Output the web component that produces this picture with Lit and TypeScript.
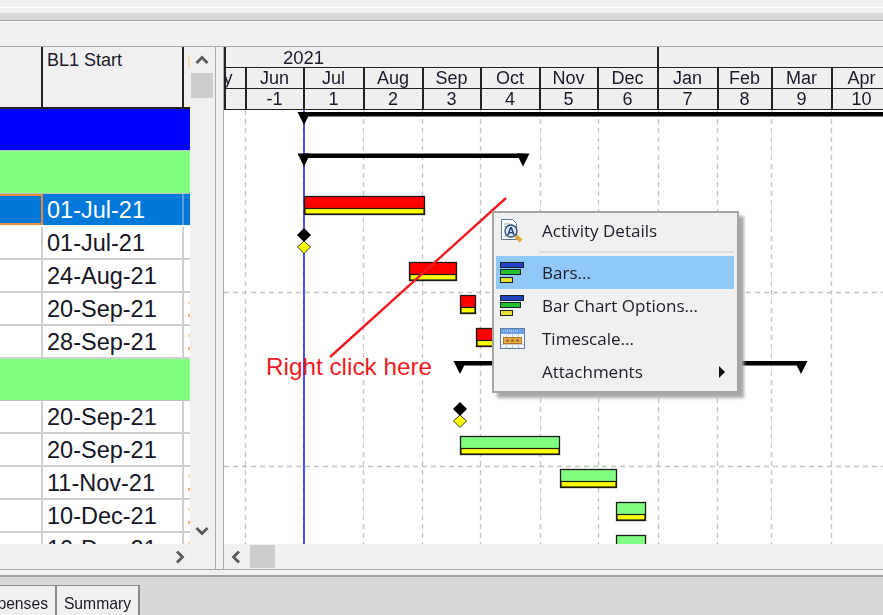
import { LitElement, html, css, svg } from "lit";
import { customElement } from "lit/decorators.js";

const months = [
  ["May", "", 21, 59], ["Jun", "-1", 58], ["Jul", "1", 60], ["Aug", "2", 59], ["Sep", "3", 58], ["Oct", "4", 59],
  ["Nov", "5", 58], ["Dec", "6", 60], ["Jan", "7", 60], ["Feb", "8", 54], ["Mar", "9", 60], ["Apr", "10", 60],
] as const;

const gridX = [245, 303, 363, 422, 480, 540, 598, 658, 717, 771, 831];

type Row = { kind: "blue" | "green" | "green1" | "sel" | "row" | "cut"; date?: string; mark?: boolean };
const rows: Row[] = [
  { kind: "blue" }, { kind: "green1" },
  { kind: "sel", date: "01-Jul-21" }, { kind: "row", date: "01-Jul-21" }, { kind: "row", date: "24-Aug-21" },
  { kind: "row", date: "20-Sep-21", mark: true }, { kind: "row", date: "28-Sep-21", mark: true },
  { kind: "green" },
  { kind: "row", date: "20-Sep-21" }, { kind: "row", date: "20-Sep-21" },
  { kind: "row", date: "11-Nov-21", mark: true }, { kind: "row", date: "10-Dec-21", mark: true },
  { kind: "cut", date: "10-Dec-21", mark: true },
];

const Y0 = 110; // gantt body origin in page y
const X0 = 224; // gantt body origin in page x

function bar(x1: number, x2: number, y: number, fill: string) {
  return svg`<rect x=${x1 + 0.5} y=${y + 0.5} width=${x2 - x1 - 1} height="18" fill=${fill} stroke="#1a1a1a" stroke-width="1.3"/>
    <rect x=${x1 + 1} y=${y + 12.5} width=${x2 - x1 - 2} height="5.5" fill="#ffff00" stroke="#1a1a1a" stroke-width="1.2"/>`;
}
function summary(x1: number, x2: number, y: number) {
  const tri = (c: number) => svg`<polygon points="${c - 6.5},${y} ${c + 6.5},${y} ${c},${y + 13}" fill="#000"/>`;
  return svg`<rect x=${x1} y=${y} width=${x2 - x1} height="4.5" fill="#000"/>${tri(x1)}${x2 < 880 ? tri(x2) : ""}`;
}
function milestone(x: number, y: number) {
  return svg`<polygon points="${x},${y - 7} ${x + 7},${y} ${x},${y + 7} ${x - 7},${y}" fill="#000"/>
    <polygon points="${x},${y + 6} ${x + 6.5},${y + 12} ${x},${y + 18.5} ${x - 6.5},${y + 12}" fill="#ffff00" stroke="#333" stroke-width="1"/>`;
}

@customElement("app-root")
export class AppRoot extends LitElement {
  static styles = css`
    :host { display: block; width: 883px; height: 615px; overflow: hidden; position: relative;
      background: #f0f0f0; font-family: "Liberation Sans", Arial, sans-serif; color: #1a1a2a; }
    .app { display: flex; flex-direction: column; width: 883px; height: 615px; filter: blur(0.4px); }
    .top { height: 47px; box-sizing: border-box; flex: none; border-bottom: 1px solid #a8a8a8; }
    .top-a { height: 7px; }
    .top-w { height: 1px; background: #fff; }
    .top-b { height: 5px; }
    .top-c { height: 7px; background: #d8d8d8; border-bottom: 1px solid #a0a0a0; }
    .top-d { height: 1px; background: #fff; }

    .main { display: flex; height: 522px; flex: none; border-bottom: 1px solid #a8a8a8; box-sizing: content-box; }
    .left { width: 215px; flex: none; display: grid; grid-template-columns: 190px 25px; grid-template-rows: 497px 25px; }
    .table { display: flex; flex-direction: column; overflow: hidden; background: #fff; }
    .thead { height: 62px; flex: none; display: grid; grid-template-columns: 43px 141px 6px; box-sizing: border-box;
      background: #f0f0f0; border-bottom: 2px solid #222; }
    .thead > div { border-right: 2px solid #222; box-sizing: border-box; }
    .thead > div:last-child { border: 0; }
    .th { font-size: 18px; padding: 3px 0 0 4px; }
    .band { height: 42px; flex: none; box-sizing: border-box; border-bottom: 1px solid #c0c0c0; }
    .band.blue { background: #0000ff; }
    .band.green, .band.green1 { background: #80ff80; }
    .band.green1 { height: 43px; }
    .tr { height: 33px; flex: none; display: grid; grid-template-columns: 43px 141px 6px; box-sizing: border-box;
      border-bottom: 2px solid #cfcfcf; background: #fff; }
    .tr > div { box-sizing: border-box; border-right: 2px solid #cfcfcf; }
    .tr > div:last-child { border: 0; }
    .date { font-size: 23.5px; line-height: 32px; padding-left: 4px; white-space: nowrap; overflow: hidden; color: #151525; }
    .tr.sel { background: #0078d7; border-bottom-color: #fff; }
    .tr.sel > .key { border: 2px solid #e88a3c; border-left: 0; }
    .tr.sel .date { color: #fff; border-right-color: #5aa0e0; }
    .tail { position: relative; overflow: hidden; }
    .tail i { display: block; width: 2px; height: 3px; margin: 8px 0 0 4px; background: #f6dfa8; }
    .tail i + i { height: 3px; margin-top: 10px; background: #f0b060; }
    .thead .tail i { height: 12px; margin-top: 8px; }

    .vs { display: flex; flex-direction: column; align-items: stretch; padding: 0 2px 0 1px; background: #f0f0f0; }
    .arrow { flex: none; display: flex; align-items: center; justify-content: center; }
    .vs .arrow { height: 26px; }
    .thumb { height: 25px; background: #cdcdcd; flex: none; }
    .grow { flex: 1; }
    .hs-left { display: flex; justify-content: flex-end; align-items: center; padding-right: 3px; background: #f0f0f0; }
    .corner { background: #f0f0f0; }

    .split { flex: none; width: 9px; box-sizing: border-box; background: #f0f0f0;
      border-left: 1px solid #ababab; border-right: 1px solid #ababab; }

    .right { flex: 1; min-width: 0; display: flex; flex-direction: column; }
    .ghead { height: 63px; flex: none; box-sizing: border-box; background: #efefef;
      border-left: 2px solid #222; display: flex; flex-direction: column; overflow: hidden; }
    .gr { display: flex; flex: none; box-sizing: border-box; border-bottom: 1.5px solid #222; height: 21px; }
    .gc { flex: none; box-sizing: border-box; border-right: 2px solid #222; font-size: 18px; text-align: center;
      overflow: hidden; display: flex; justify-content: center; white-space: nowrap; line-height: 20px; padding-right: 1px; }
    .gc.first { justify-content: flex-end; padding-right: 0; }
    .gc span { flex: none; }
    .yr { font-size: 18.5px; line-height: 21px; padding-left: 57px; width: 433px; flex: none; box-sizing: border-box;
      border-right: 2px solid #222; }
    .gbody { height: 434px; flex: none; background: #fff; position: relative; overflow: hidden; }
    .gbody svg { display: block; }
    .hs { height: 25px; flex: none; background: #f0f0f0; display: flex; align-items: stretch; }
    .hs .arrow { width: 26px; padding-right: 2px; box-sizing: border-box; }
    .hthumb { width: 25px; background: #cdcdcd; margin: 1px 0; }

    .foot { flex: 1; display: flex; flex-direction: column; min-height: 0; }
    .foot-w { height: 5px; flex: none; background: #f0f0f0; border-bottom: 2px solid #a4a4a4; box-sizing: content-box; }
    .tabs { flex: 1; background: #d8d8d8; display: flex; align-items: flex-end; }
    .tab { height: 30px; box-sizing: border-box; background: #f0f0f0; border-top: 1px solid #8a8a8a;
      border-right: 2px solid #8a8a8a; font-size: 15.7px; line-height: 35px; overflow: hidden; white-space: nowrap;
      display: flex; justify-content: flex-end; padding: 0 7px; }
    .tab.cut { width: 57px; padding-right: 7px; }
    .tab.on { width: 83px; }

    .menu { position: absolute; left: 492px; top: 211px; width: 247px; height: 182px; box-sizing: border-box;
      background: #f0f0f0; border: 2px solid #a4a4a4; box-shadow: 5px 5px 3px #a8a8a8; padding: 1px 3px 0 2px;
      display: flex; flex-direction: column; font-family: "Open Sans", "Noto Sans", sans-serif; font-size: 17px; color: #20202c;
      filter: blur(0.3px); }
    .item { height: 33px; flex: none; display: flex; align-items: center; position: relative; }
    .item.hot { background: #90c8f7; }
    .ic { width: 46px; flex: none; display: flex; padding-left: 4px; box-sizing: border-box; }
    .ic.doc { padding-left: 3px; }
    .sep { height: 9px; flex: none; position: relative; }
    .sep::after { content: ""; position: absolute; left: 43px; right: 0; top: 4px; height: 2px; background: #dcdcdc; }
    .lbl { flex: 1; white-space: nowrap; }
    .sub { margin-right: 9px; width: 0; height: 0; border-left: 6px solid #111; border-top: 6px solid transparent; border-bottom: 6px solid transparent; }
  `;

  private chev(dir: "up" | "down" | "left" | "right") {
    const rot = { up: 0, down: 180, left: -90, right: 90 }[dir];
    return html`<svg width="14" height="14" viewBox="0 0 14 14" style="transform:rotate(${rot}deg)">
      <path d="M1.5 10 L7 4.5 L12.5 10" fill="none" stroke="#5a5a5a" stroke-width="2.8"/></svg>`;
  }

  private barsIcon() {
    const r = (y: number, w: number, f: string) => svg`<rect x="0.5" y=${y + 0.5} width=${w - 1} height="5" fill=${f} stroke="#18222e"/>`;
    return html`<svg width="25" height="22" viewBox="0 0 25 22">${r(0, 24, "#2244c4")}${r(7, 21, "#22c02c")}${r(15, 13, "#e6e032")}</svg>`;
  }

  private rowEl(r: Row) {
    if (r.kind === "blue" || r.kind === "green" || r.kind === "green1") return html`<div class="band ${r.kind}"></div>`;
    return html`<div class="tr ${r.kind === "sel" ? "sel" : ""}">
      <div class="key"></div>
      <div class="date">${r.date}</div>
      <div class="tail">${r.mark ? html`<i></i><i></i>` : ""}</div>
    </div>`;
  }

  private gantt() {
    return html`<svg width="659" height="434" viewBox="${X0} ${Y0} 659 434">
      ${gridX.map((x) => svg`<line x1=${x + 0.5} x2=${x + 0.5} y1=${Y0} y2="544" stroke="#c4c4c4" stroke-width="1.3" stroke-dasharray="5 4"/>`)}
      ${[292, 466].map((y) => svg`<line x1=${X0} x2="883" y1=${y + 0.5} y2=${y + 0.5} stroke="#c4c4c4" stroke-width="1.3" stroke-dasharray="5 4"/>`)}
      <line x1="304" x2="304" y1=${Y0} y2="544" stroke="#2a2aff" stroke-width="1.6"/>
      ${summary(304, 900, 112)}
      ${summary(304, 523, 153.5)}
      ${summary(460, 801, 361)}
      ${bar(304, 425, 196, "#ff0000")}
      ${bar(409, 457, 262, "#ff0000")}
      ${bar(460, 476, 295, "#ff0000")}
      ${bar(476, 510, 328, "#ff0000")}
      ${milestone(304, 235)}
      ${milestone(460, 409)}
      ${bar(460, 560, 436, "#80ff80")}
      ${bar(560, 617, 469, "#80ff80")}
      ${bar(616, 646, 502, "#80ff80")}
      ${bar(616, 646, 535, "#80ff80")}
      <line x1="506" y1="198" x2="330" y2="357" stroke="#ed1c24" stroke-width="2.4"/>
      <text x="266" y="375" fill="#ed1c24" font-size="24.3" font-family="Liberation Sans, Arial, sans-serif">Right click here</text>
    </svg>`;
  }

  render() {
    return html`<div class="app">
      <div class="top"><div class="top-a"></div><div class="top-w"></div><div class="top-b"></div><div class="top-c"></div><div class="top-d"></div></div>
      <div class="main">
        <div class="left">
          <div class="table">
            <div class="thead"><div></div><div class="th">BL1 Start</div><div class="tail"><i></i></div></div>
            ${rows.map((r) => this.rowEl(r))}
          </div>
          <div class="vs">
            <div class="arrow">${this.chev("up")}</div>
            <div class="thumb"></div>
            <div class="grow"></div>
            <div class="arrow">${this.chev("down")}</div>
          </div>
          <div class="hs-left">${this.chev("right")}</div>
          <div class="corner"></div>
        </div>
        <div class="split"></div>
        <div class="right">
          <div class="ghead">
            <div class="gr"><div class="yr">2021</div></div>
            <div class="gr">${months.map((m) => html`<div class="gc ${m[0] === "May" ? "first" : ""}" style="width:${m[2]}px"><span style="width:${m[3] ?? m[2]}px">${m[0]}</span></div>`)}</div>
            <div class="gr">${months.map((m) => html`<div class="gc" style="width:${m[2]}px">${m[1]}</div>`)}</div>
          </div>
          <div class="gbody">${this.gantt()}</div>
          <div class="hs"><div class="arrow">${this.chev("left")}</div><div class="hthumb"></div></div>
        </div>
      </div>
      <div class="foot">
        <div class="foot-w"></div>
        <div class="tabs"><div class="tab cut"><span>Expenses</span></div><div class="tab on">Summary</div></div>
      </div>
    </div>
    <div class="menu">
      <div class="item"><div class="ic doc">
        <svg width="26" height="26" viewBox="0 0 26 26">
          <path d="M2.5 1.5h11l4 4v16h-15z" fill="#fff" stroke="#5a7a9a"/>
          <path d="M5 6h7M5 9h5M5 18h8" stroke="#8aa4c0"/>
          <circle cx="12" cy="13" r="6" fill="#dce8f6" stroke="#33507a" stroke-width="1.4"/>
          <text x="12" y="17" font-size="11" font-weight="bold" text-anchor="middle" fill="#24407a" font-family="Liberation Sans, sans-serif">A</text>
          <path d="M17 18l5 5" stroke="#e2a63c" stroke-width="4"/>
        </svg>
      </div><div class="lbl">Activity Details</div></div>
      <div class="sep"></div>
      <div class="item hot"><div class="ic">${this.barsIcon()}</div><div class="lbl">Bars...</div></div>
      <div class="item"><div class="ic">${this.barsIcon()}</div><div class="lbl">Bar Chart Options...</div></div>
      <div class="item"><div class="ic">
        <svg width="25" height="21" viewBox="0 0 25 21">
          <rect x="0.5" y="0.5" width="24" height="20" fill="#f4f6fa" stroke="#5f7fa4"/>
          <rect x="1" y="1" width="23" height="5" fill="#6f9fe8"/>
          <path d="M3 3h15" stroke="#cfe0f8" stroke-dasharray="1 1"/>
          <path d="M1 16.5h23M6.5 6v14M12.5 6v14M18.5 6v14" stroke="#c4ccd6"/>
          <rect x="3.5" y="9.5" width="18" height="6" fill="#e9a93c" stroke="#a9772a"/>
          <path d="M6 12.5h13" stroke="#8a6a30" stroke-width="2" stroke-dasharray="3 2"/>
        </svg>
      </div><div class="lbl">Timescale...</div></div>
      <div class="item"><div class="ic"></div><div class="lbl">Attachments</div><div class="sub"></div></div>
    </div>`;
  }
}
